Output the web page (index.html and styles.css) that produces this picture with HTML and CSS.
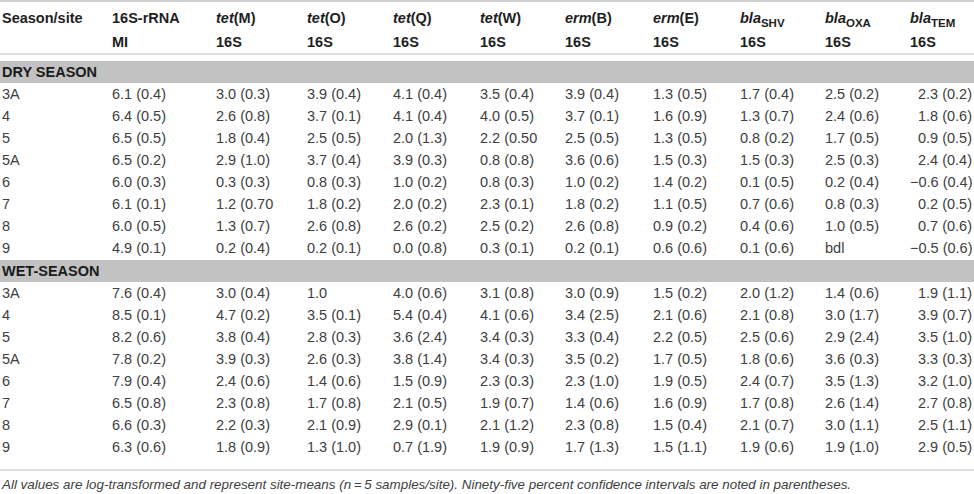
FILE: index.html
```html
<!DOCTYPE html>
<html lang="en">
<head>
    <meta charset="UTF-8">
    <meta name="viewport" content="width=device-width, initial-scale=1.0">
    <title>Gene abundance by season and site</title>
    <link rel="stylesheet" href="styles.css">
</head>
<body>
    <table class="data-table">
        <colgroup>
            <col class="c-site">
            <col class="c-rrna">
            <col class="c-tetm">
            <col class="c-teto">
            <col class="c-tetq">
            <col class="c-tetw">
            <col class="c-ermb">
            <col class="c-erme">
            <col class="c-shv">
            <col class="c-oxa">
            <col class="c-tem">
        </colgroup>
        <thead>
            <tr class="head-top">
                <th>Season/site</th>
                <th>16S-rRNA</th>
                <th><i>tet</i>(M)</th>
                <th><i>tet</i>(O)</th>
                <th><i>tet</i>(Q)</th>
                <th><i>tet</i>(W)</th>
                <th><i>erm</i>(B)</th>
                <th><i>erm</i>(E)</th>
                <th><i>bla</i><sub>SHV</sub></th>
                <th><i>bla</i><sub>OXA</sub></th>
                <th><i>bla</i><sub>TEM</sub></th>
            </tr>
            <tr class="head-bottom">
                <th></th>
                <th>MI</th>
                <th>16S</th>
                <th>16S</th>
                <th>16S</th>
                <th>16S</th>
                <th>16S</th>
                <th>16S</th>
                <th>16S</th>
                <th>16S</th>
                <th>16S</th>
            </tr>
        </thead>
        <tbody>
            <tr class="season first"><td colspan="11">DRY SEASON</td></tr>
            <tr><td>3A</td><td>6.1 (0.4)</td><td>3.0 (0.3)</td><td>3.9 (0.4)</td><td>4.1 (0.4)</td><td>3.5 (0.4)</td><td>3.9 (0.4)</td><td>1.3 (0.5)</td><td>1.7 (0.4)</td><td>2.5 (0.2)</td><td>2.3 (0.2)</td></tr>
            <tr><td>4</td><td>6.4 (0.5)</td><td>2.6 (0.8)</td><td>3.7 (0.1)</td><td>4.1 (0.4)</td><td>4.0 (0.5)</td><td>3.7 (0.1)</td><td>1.6 (0.9)</td><td>1.3 (0.7)</td><td>2.4 (0.6)</td><td>1.8 (0.6)</td></tr>
            <tr><td>5</td><td>6.5 (0.5)</td><td>1.8 (0.4)</td><td>2.5 (0.5)</td><td>2.0 (1.3)</td><td>2.2 (0.50</td><td>2.5 (0.5)</td><td>1.3 (0.5)</td><td>0.8 (0.2)</td><td>1.7 (0.5)</td><td>0.9 (0.5)</td></tr>
            <tr><td>5A</td><td>6.5 (0.2)</td><td>2.9 (1.0)</td><td>3.7 (0.4)</td><td>3.9 (0.3)</td><td>0.8 (0.8)</td><td>3.6 (0.6)</td><td>1.5 (0.3)</td><td>1.5 (0.3)</td><td>2.5 (0.3)</td><td>2.4 (0.4)</td></tr>
            <tr><td>6</td><td>6.0 (0.3)</td><td>0.3 (0.3)</td><td>0.8 (0.3)</td><td>1.0 (0.2)</td><td>0.8 (0.3)</td><td>1.0 (0.2)</td><td>1.4 (0.2)</td><td>0.1 (0.5)</td><td>0.2 (0.4)</td><td>&minus;0.6 (0.4)</td></tr>
            <tr><td>7</td><td>6.1 (0.1)</td><td>1.2 (0.70</td><td>1.8 (0.2)</td><td>2.0 (0.2)</td><td>2.3 (0.1)</td><td>1.8 (0.2)</td><td>1.1 (0.5)</td><td>0.7 (0.6)</td><td>0.8 (0.3)</td><td>0.2 (0.5)</td></tr>
            <tr><td>8</td><td>6.0 (0.5)</td><td>1.3 (0.7)</td><td>2.6 (0.8)</td><td>2.6 (0.2)</td><td>2.5 (0.2)</td><td>2.6 (0.8)</td><td>0.9 (0.2)</td><td>0.4 (0.6)</td><td>1.0 (0.5)</td><td>0.7 (0.6)</td></tr>
            <tr><td>9</td><td>4.9 (0.1)</td><td>0.2 (0.4)</td><td>0.2 (0.1)</td><td>0.0 (0.8)</td><td>0.3 (0.1)</td><td>0.2 (0.1)</td><td>0.6 (0.6)</td><td>0.1 (0.6)</td><td>bdl</td><td>&minus;0.5 (0.6)</td></tr>

            <tr class="season"><td colspan="11">WET-SEASON</td></tr>
            <tr><td>3A</td><td>7.6 (0.4)</td><td>3.0 (0.4)</td><td>1.0</td><td>4.0 (0.6)</td><td>3.1 (0.8)</td><td>3.0 (0.9)</td><td>1.5 (0.2)</td><td>2.0 (1.2)</td><td>1.4 (0.6)</td><td>1.9 (1.1)</td></tr>
            <tr><td>4</td><td>8.5 (0.1)</td><td>4.7 (0.2)</td><td>3.5 (0.1)</td><td>5.4 (0.4)</td><td>4.1 (0.6)</td><td>3.4 (2.5)</td><td>2.1 (0.6)</td><td>2.1 (0.8)</td><td>3.0 (1.7)</td><td>3.9 (0.7)</td></tr>
            <tr><td>5</td><td>8.2 (0.6)</td><td>3.8 (0.4)</td><td>2.8 (0.3)</td><td>3.6 (2.4)</td><td>3.4 (0.3)</td><td>3.3 (0.4)</td><td>2.2 (0.5)</td><td>2.5 (0.6)</td><td>2.9 (2.4)</td><td>3.5 (1.0)</td></tr>
            <tr><td>5A</td><td>7.8 (0.2)</td><td>3.9 (0.3)</td><td>2.6 (0.3)</td><td>3.8 (1.4)</td><td>3.4 (0.3)</td><td>3.5 (0.2)</td><td>1.7 (0.5)</td><td>1.8 (0.6)</td><td>3.6 (0.3)</td><td>3.3 (0.3)</td></tr>
            <tr><td>6</td><td>7.9 (0.4)</td><td>2.4 (0.6)</td><td>1.4 (0.6)</td><td>1.5 (0.9)</td><td>2.3 (0.3)</td><td>2.3 (1.0)</td><td>1.9 (0.5)</td><td>2.4 (0.7)</td><td>3.5 (1.3)</td><td>3.2 (1.0)</td></tr>
            <tr><td>7</td><td>6.5 (0.8)</td><td>2.3 (0.8)</td><td>1.7 (0.8)</td><td>2.1 (0.5)</td><td>1.9 (0.7)</td><td>1.4 (0.6)</td><td>1.6 (0.9)</td><td>1.7 (0.8)</td><td>2.6 (1.4)</td><td>2.7 (0.8)</td></tr>
            <tr><td>8</td><td>6.6 (0.3)</td><td>2.2 (0.3)</td><td>2.1 (0.9)</td><td>2.9 (0.1)</td><td>2.1 (1.2)</td><td>2.3 (0.8)</td><td>1.5 (0.4)</td><td>2.1 (0.7)</td><td>3.0 (1.1)</td><td>2.5 (1.1)</td></tr>
            <tr><td>9</td><td>6.3 (0.6)</td><td>1.8 (0.9)</td><td>1.3 (1.0)</td><td>0.7 (1.9)</td><td>1.9 (0.9)</td><td>1.7 (1.3)</td><td>1.5 (1.1)</td><td>1.9 (0.6)</td><td>1.9 (1.0)</td><td>2.9 (0.5)</td></tr>
        </tbody>
    </table>

    <p class="note">All values are log-transformed and represent site-means (<i>n</i>&thinsp;=&thinsp;5 samples/site). Ninety-five percent confidence intervals are noted in parentheses.</p>
</body>
</html>
```

FILE: styles.css
```css
body {
    margin: 0;
    background-color: #fff;
    font-family: 'Liberation Sans', Arial, sans-serif;
    color: #404040;
}
.data-table {
    width: 974px;
    table-layout: fixed;
    border-collapse: separate;
    border-spacing: 0;
    border-top: 2px solid #cfcfcf;
    font-size: 14.5px;
    line-height: 22px;
}
.c-site { width: 112px; }
.c-rrna { width: 104px; }
.c-tetm { width: 91px; }
.c-teto { width: 86px; }
.c-tetq { width: 87px; }
.c-tetw { width: 85px; }
.c-ermb { width: 88px; }
.c-erme { width: 87px; }
.c-shv { width: 85px; }
.c-oxa { width: 85px; }
.c-tem { width: 64px; }
th, td {
    padding: 0;
    text-align: left;
    white-space: nowrap;
}
th:first-child, td:first-child {
    padding-left: 2px;
}
th {
    font-weight: bold;
    color: #1e1e1e;
}
th i {
    font-style: italic;
}
th sub {
    font-size: 11.5px;
    vertical-align: -4px;
    line-height: 0;
}
.head-top th {
    padding-top: 5px;
    padding-bottom: 1px;
    vertical-align: top;
}
.head-bottom th {
    padding-top: 1px;
    vertical-align: top;
    border-bottom: 2px solid #dedede;
}
td {
    height: 22px;
    vertical-align: middle;
}
td:last-child {
    text-align: right;
    padding-right: 2px;
}
.season td {
    background-color: #c2c2c2;
    font-weight: bold;
    color: #1a1a1a;
    text-align: left;
    border-top: 1px solid #fff;
}
.season.first td {
    border-top: 6px solid #fff;
}
.note {
    margin: 11px 0 0;
    padding: 6px 0 0 2px;
    border-top: 2px solid #e0e0e0;
    font-size: 13.4px;
    line-height: 16px;
    font-style: italic;
    color: #404040;
}
```
